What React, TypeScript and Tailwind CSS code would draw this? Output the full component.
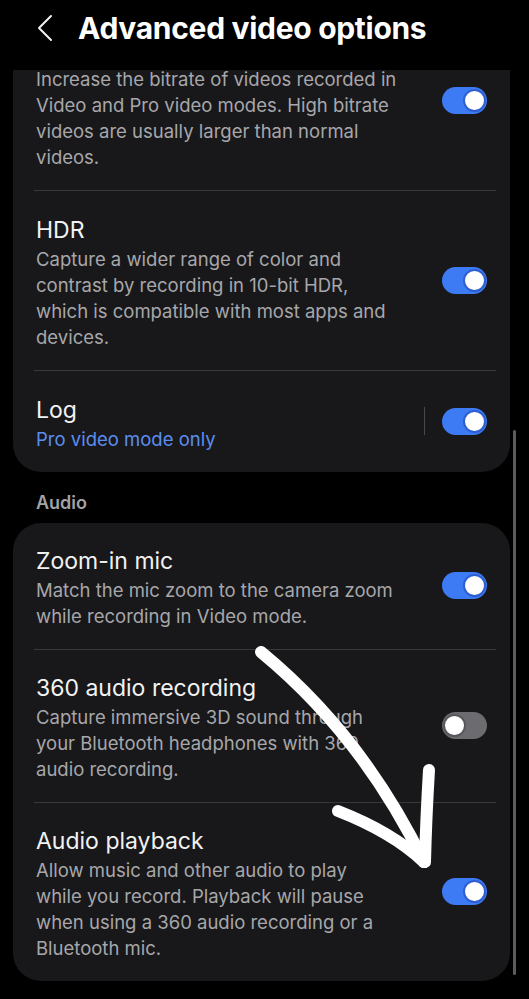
import React from "react";

const font = { fontFamily: "Inter, 'Noto Sans', sans-serif" };

function Toggle({ on }: { on: boolean }) {
  return on ? (
    <div className="relative mb-[4px] h-[27px] w-[45px] shrink-0 rounded-full bg-[#3d7bf4]">
      <div className="absolute right-[1px] top-[2px] h-[23px] w-[23px] rounded-full border-2 border-[#2d5fd3] bg-white" />
    </div>
  ) : (
    <div className="relative mb-[4px] h-[27px] w-[45px] shrink-0 rounded-full bg-[#6c6c70]">
      <div className="absolute left-[1px] top-[2px] h-[23px] w-[23px] rounded-full border-2 border-[#58585c] bg-white" />
    </div>
  );
}

function Row({
  title,
  lines,
  on,
  blue,
  divider,
  className = "",
  vline,
  pt = "pt-[23px]",
}: {
  title?: string;
  lines: string[];
  on: boolean;
  blue?: boolean;
  divider?: boolean;
  className?: string;
  vline?: boolean;
  pt?: string;
}) {
  return (
    <div className={className}>
      <div className={"flex items-center pl-[23px] pr-[23px] pb-5 " + pt}>
        <div className="min-w-0 flex-1 pr-[20px]">
          {title ? (
            <div className="text-[23px] leading-[32px] text-[#f2f2f2]">{title}</div>
          ) : (
            <div className="h-[32px]" />
          )}
          <div
            className={
              blue
                ? "text-[18.5px] leading-[26px] text-[#5b8ef0]"
                : "text-[18.5px] leading-[26px] text-[#a7a7ab]"
            }
          >
            {lines.map((l, i) => (
              <div key={i} className="whitespace-nowrap">
                {l}
              </div>
            ))}
          </div>
        </div>
        {vline && <div className="mb-[4px] mr-[17px] h-[28px] w-px bg-[#48484c]" />}
        <Toggle on={on} />
      </div>
      {divider && <div className="ml-[21px] mr-[14px] h-px bg-[#39393c]" />}
    </div>
  );
}

export default function App() {
  return (
    <div className="relative h-[999px] w-[529px] overflow-hidden bg-black" style={font}>
      {/* Header */}
      <div className="relative z-10 flex h-[70px] items-center bg-black pb-[14px]">
        <svg width="16" height="28" viewBox="0 0 16 28" className="ml-[37px] shrink-0">
          <path d="M14 2 L2 14 L14 26" fill="none" stroke="#f0f0f0" strokeWidth="2" strokeLinecap="round" strokeLinejoin="round" />
        </svg>
        <h1 className="ml-[25px] text-[30px] font-bold leading-[36px] tracking-[-0.3px] text-white">
          Advanced video options
        </h1>
      </div>

      {/* Card 1 */}
      <div className="ml-[13px] w-[497px] rounded-[28px] bg-[#18181a]">
        <div className="mt-[-59px]">
          <Row
            lines={[
              "Increase the bitrate of videos recorded in",
              "Video and Pro video modes. High bitrate",
              "videos are usually larger than normal",
              "videos.",
            ]}
            on
            divider
          />
        </div>
        <Row
          title="HDR"
          lines={[
            "Capture a wider range of color and",
            "contrast by recording in 10-bit HDR,",
            "which is compatible with most apps and",
            "devices.",
          ]}
          on
          divider
        />
        <Row title="Log" lines={["Pro video mode only"]} blue on vline />
      </div>

      {/* Audio header */}
      <div className="pl-[36px] pt-[19px] pb-[9px] text-[18px] font-semibold leading-[23px] text-[#a3a3a6]">
        Audio
      </div>

      {/* Card 2 */}
      <div className="ml-[13px] w-[497px] rounded-[28px] bg-[#18181a]">
        <Row
          title="Zoom-in mic"
          lines={["Match the mic zoom to the camera zoom", "while recording in Video mode."]}
          on
          divider
          pt="pt-[22px]"
        />
        <Row
          title="360 audio recording"
          lines={[
            "Capture immersive 3D sound through",
            "your Bluetooth headphones with 360",
            "audio recording.",
          ]}
          on={false}
          divider
          pt="pt-[22px]"
        />
        <Row
          title="Audio playback"
          lines={[
            "Allow music and other audio to play",
            "while you record. Playback will pause",
            "when using a 360 audio recording or a",
            "Bluetooth mic.",
          ]}
          on
          pt="pt-[22px]"
        />
      </div>

      {/* Scrollbar */}
      <div className="absolute left-[513px] top-[430px] h-[545px] w-[3px] rounded-full bg-[#5c5c5e]" />

      {/* Hand-drawn arrow */}
      <svg className="pointer-events-none absolute left-0 top-0 z-20" width="529" height="999" viewBox="0 0 529 999">
        <g fill="none" stroke="#ffffff" strokeLinecap="round" strokeLinejoin="round">
          <path d="M261 652 Q 362 735 424 862" strokeWidth="12" />
          <path d="M429 770 Q 426 820 425 862" strokeWidth="12" />
          <path d="M338 811 Q 392 832 424 862" strokeWidth="12" />
        </g>
      </svg>
    </div>
  );
}
